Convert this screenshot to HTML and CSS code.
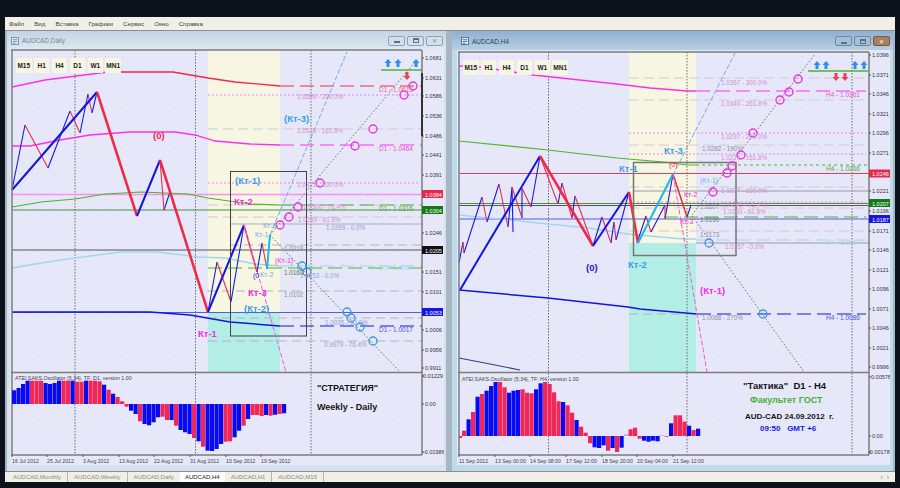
FILE: index.html
```html
<!DOCTYPE html>
<html lang="ru">
<head>
    <meta charset="UTF-8">
    <title>AUDCAD</title>
    <link rel="stylesheet" href="styles.css">
</head>
<body>
    <div class="app">
        <div class="menubar">
            <span>Файл</span><span>Вид</span><span>Вставка</span><span>Графики</span><span>Сервис</span><span>Окно</span><span>Справка</span>
        </div>

        <div class="mdi">
            <!-- Daily -->
            <div class="chart-window daily">
                <div class="titlebar">
                    <svg class="win-icon" width="8" height="8" viewBox="0 0 9 9"><rect x="0.5" y="0.5" width="8" height="8" fill="#dfeaf4" stroke="#6f93b5"/><path d="M2 3h5M2 5h5M2 7h3" stroke="#6f93b5"/></svg>
                    <span class="win-title">AUDCAD,Daily</span>
                    <div class="win-buttons">
                        <span class="win-btn"><i class="ic-min"></i></span>
                        <span class="win-btn"><i class="ic-max"></i></span>
                        <span class="win-btn">&#10005;</span>
                    </div>
                </div>
                <div class="chart">
                    <div class="tf-bar">
                        <span>M15</span><span>H1</span><span>H4</span><span>D1</span><span>W1</span><span>MN1</span>
                    </div>
                    <svg width="434" height="416" viewBox="10 49 434 416">
                        <defs>
                            <pattern id="dots-a" width="17" height="13" patternUnits="userSpaceOnUse"><rect x="3" y="4" width="1" height="1" fill="#ccd0e6"/></pattern>
                        </defs>
                        <rect x="12" y="50" width="410" height="405" fill="url(#dots-a)"/>
                        <rect class="band-yellow" x="208" y="50" width="72" height="262"/>
                        <rect class="band-teal" x="208" y="312" width="72" height="60"/>

                        <path class="vdot" d="M75 50V455M195.500 50V455M311 50V455"/>

                        <!-- fibo levels -->
                        <path class="fib-dot" d="M208 95H422M208 183H420"/>
                        <path class="fib-dash" d="M208 129H422M208 205H422M208 217H422"/>
                        <path class="fib-thin" d="M230 224H422"/>
                        <path class="fib-grey" d="M230 245H422M208 291H422M208 318H422M208 341H422"/>

                        <!-- horizontal price lines -->
                        <path class="line-pink" d="M12 194.500H422"/>
                        <path class="line-green" d="M12 210H422"/>
                        <path class="line-black" d="M12 250H422"/>
                        <path class="line-blue" d="M12 312.500H422"/>

                        <!-- moving curves -->
                        <polyline class="c-magenta" points="12,87 45,80 108,72"/>
                        <polyline class="c-red" points="108,72 173,72 208,78 235,82 280,86"/>
                        <path class="c-red dashed" d="M280 86H422"/>
                        <polyline class="c-magenta" points="12,146 30,146 60,140 90,135 130,132 175,132 195,135 215,141 250,144 280,145"/>
                        <path class="c-magenta dashed" d="M280 145H422"/>
                        <polyline class="c-green" points="12,207 41,202 75,199 105,194 141,192 188,194 208,198 250,204 280,205"/>
                        <path class="c-green dashed" d="M280 205H422M208 268H422"/>
                        <polyline class="c-sky" points="12,268 41,263 75,258 121,252 158,252 198,257 225,258 255,264 280,266"/>
                        <path class="c-sky dashed" d="M280 266H422"/>
                        <polyline class="c-navy" points="12,312 150,312 190,315 230,322 280,326"/>
                        <path class="c-navy dashed" d="M280 326H422"/>

                        <!-- zigzags -->
                        <path class="zz-thin-b" d="M12 190L25 125M48 168L70 111M80 133L88 94M92 113L97 92M164 210L170 192M208 312L217 262M231 302L244 225M257 272L262 243"/>
                        <path class="zz-thin-r" d="M25 125L48 168M70 111L80 133M88 94L92 113M160 160L164 210M170 192L175 210M217 262L231 302M262 243L267 269"/>
                        <polyline class="zz-thick-b" points="12,190 97,92"/>
                        <polyline class="zz-thick-r" points="97,92 137,216"/>
                        <polyline class="zz-thick-b" points="137,216 160,160"/>
                        <polyline class="zz-thick-r" points="160,160 208,312"/>
                        <polyline class="zz-thick-b" points="208,312 244,225"/>
                        <polyline class="zz-mid-r" points="244,225 257,272"/>
                        <polyline class="zz-cyan" points="267,269 270,235"/>

                        <rect class="box" x="230.500" y="171.500" width="76" height="164.500"/>

                        <path class="dotline" d="M270 235L415 62M270 235L400 372"/>
                        <path class="blue-dash" d="M270 235L347 52"/>
                        <path class="pink-dash" d="M244 225L286 372"/>

                        <g class="ring-m">
                            <circle cx="413" cy="86" r="4"/><circle cx="404" cy="95" r="4"/><circle cx="373" cy="129" r="4"/><circle cx="355" cy="146" r="4"/><circle cx="320" cy="183" r="4"/><circle cx="298" cy="207" r="4"/><circle cx="289" cy="217" r="4"/><circle cx="280" cy="225" r="4"/>
                        </g>
                        <g class="ring-b">
                            <circle cx="302" cy="266" r="4"/><circle cx="307" cy="272" r="4"/><circle cx="347" cy="312" r="4"/><circle cx="351" cy="318" r="4"/><circle cx="360" cy="327" r="4"/><circle cx="373" cy="341" r="4"/>
                        </g>

                        <!-- level labels -->
                        <g class="t-pink">
                            <text x="297" y="99">1.0589 - 200.0%</text>
                            <text x="297" y="133">1.0525 - 161.8%</text>
                            <text x="297" y="187">1.0371 - 100.0%</text>
                            <text x="303" y="209">1.0300 - 76.4%</text>
                            <text x="298" y="222">1.0289 - 61.8%</text>
                        </g>
                        <g class="t-steel">
                            <text x="326" y="230">1.0269 - 0.0%</text>
                            <text x="300" y="278">1.0153 - 0.0%</text>
                            <text x="325" y="325">1.0035 - 50.0%</text>
                            <text x="324" y="347">0.9979 - 76.4%</text>
                        </g>
                        <g class="t-grey">
                            <text x="284" y="251">1.0218</text>
                            <text x="284" y="297">1.0102</text>
                        </g>
                        <text class="t-olive" x="284" y="275">1.0160</text>
                        <text class="t-d1 red" x="379" y="92">D1 - 1.0613</text>
                        <text class="t-d1 mag" x="379" y="151">D1 - 1.0464</text>
                        <text class="t-d1 grn" x="379" y="211">D1 - 1.0316</text>
                        <text class="t-d1 sky" x="379" y="270">D1 - 1.0164</text>
                        <text class="t-d1 nav" x="379" y="332">D1 - 1.0017</text>

                        <!-- wave labels -->
                        <text class="t-big red" x="153" y="139">(0)</text>
                        <text class="t-big sky" x="284" y="122">(Кт-3)</text>
                        <text class="t-big sky" x="235" y="184">(Кт-1)</text>
                        <text class="t-big mag" x="234" y="205">Кт-2</text>
                        <text class="t-big sky" x="244" y="312">(Кт-2)</text>
                        <text class="t-big mag" x="248" y="296">Кт-3</text>
                        <text class="t-big mag" x="198" y="337">Кт-1</text>
                        <text class="t-small mag" x="275" y="263">(Кт-1)</text>
                        <text class="t-small sky" x="263" y="228">Кт-3</text>
                        <text class="t-small sky" x="255" y="237">Кт-1</text>
                        <text class="t-small sky" x="260" y="277">Кт-2</text>
                        <text class="t-small nav" x="253" y="278">(0</text>

                        <!-- arrows -->
                        <path class="up" d="M388 59l-3.500 4h2v4h3v-4h2zM398 59l-3.500 4h2v4h3v-4h2zM416 59l-3.500 4h2v4h3v-4h2z"/>
                        <path class="sig-line" d="M381 70H422"/>
                        <path class="down" d="M407 80l3.500-4h-2v-4h-3v4h-2z"/>

                        <!-- axis -->
                        <path class="frame" d="M11 372.500H422M11 50H422M12 50V455M422 50V455M11 455H422"/>
                        <path class="axis-mark" d="M422 73V136"/>
                        <path class="ticks" d="M422 58h2M422 78h2M422 96h2M422 116h2M422 136h2M422 155h2M422 175h2M422 233h2M422 272h2M422 292h2M422 330h2M422 350h2M422 368h2M422 376h2M422 404h2M422 452h2"/>
                        <g class="t-axis">
                            <text x="425" y="60">1.0681</text><text x="425" y="80">1.0631</text><text x="425" y="98">1.0586</text><text x="425" y="118">1.0536</text><text x="425" y="138">1.0486</text><text x="425" y="157">1.0441</text><text x="425" y="177">1.0391</text><text x="425" y="235">1.0246</text><text x="425" y="274">1.0151</text><text x="425" y="294">1.0101</text><text x="425" y="332">1.0006</text><text x="425" y="352">0.9956</text><text x="425" y="370">0.9911</text><text x="423" y="378">0.01229</text><text x="425" y="406">0.00</text><text x="423" y="454">-0.01986</text>
                        </g>
                        <rect class="tag-red" x="422" y="190" width="21" height="8"/><text class="t-tag" x="425" y="196.500">1.0384</text>
                        <rect class="tag-green" x="422" y="206" width="21" height="8"/><text class="t-tag" x="425" y="212.500">1.0304</text>
                        <rect class="tag-black" x="422" y="246" width="21" height="8"/><text class="t-tag" x="425" y="252.500">1.0205</text>
                        <rect class="tag-blue" x="422" y="308" width="21" height="8"/><text class="t-tag" x="425" y="314.500">1.0053</text>

                        <!-- oscillator -->
                        <g id="osc-daily"></g>
                        <text class="t-osc" x="15" y="380">ATEI.SAKS.Oscillator (5,34), TF: D1, version 1.00</text>
                        <text class="t-note" x="317" y="391">"СТРАТЕГИЯ"</text>
                        <text class="t-note" x="317" y="410">Weekly - Daily</text>
                        <g class="t-date">
                            <text x="12" y="463">16 Jul 2012</text><text x="47" y="463">25 Jul 2012</text><text x="83" y="463">3 Aug 2012</text><text x="119" y="463">13 Aug 2012</text><text x="154" y="463">22 Aug 2012</text><text x="190" y="463">31 Aug 2012</text><text x="226" y="463">10 Sep 2012</text><text x="261" y="463">19 Sep 2012</text>
                        </g>
                        <path class="frame-thin" d="M12 455v2M47 455v2M83 455v2M119 455v2M154 455v2M190 455v2M226 455v2M261 455v2"/>
                    </svg>
                </div>
            </div>

            <!-- H4 -->
            <div class="chart-window h4">
                <div class="titlebar">
                    <svg class="win-icon" width="8" height="8" viewBox="0 0 9 9"><rect x="0.5" y="0.5" width="8" height="8" fill="#dfeaf4" stroke="#49708f"/><path d="M2 3h5M2 5h5M2 7h3" stroke="#49708f"/></svg>
                    <span class="win-title">AUDCAD,H4</span>
                    <div class="win-buttons">
                        <span class="win-btn"><i class="ic-min"></i></span>
                        <span class="win-btn"><i class="ic-max"></i></span>
                        <span class="win-btn close">&#10005;</span>
                    </div>
                </div>
                <div class="chart">
                    <div class="tf-bar">
                        <span>M15</span><span>H1</span><span>H4</span><span>D1</span><span>W1</span><span>MN1</span>
                    </div>
                    <svg width="433" height="415" viewBox="457 50 433 415">
                        <defs>
                            <pattern id="dots-b" width="17" height="13" patternUnits="userSpaceOnUse"><rect x="3" y="4" width="1" height="1" fill="#ccd0e6"/></pattern>
                        </defs>
                        <rect x="459" y="52" width="410" height="403" fill="url(#dots-b)"/>
                        <rect class="band-yellow" x="629" y="52" width="67" height="191"/>
                        <rect class="band-teal" x="629" y="243" width="67" height="129"/>

                        <path class="vdot" d="M548.500 52V455M687 52V455M852 52V455"/>

                        <!-- fibo levels -->
                        <path class="fib-dash" d="M629 78H866M629 100H866M629 145H866M629 187H866M629 208H866M629 231H866"/>
                        <path class="fib-dot" d="M629 133H866M629 154H866M629 202H866"/>
                        <path class="fib-grey" d="M629 314H700"/>

                        <!-- horizontal price lines -->
                        <path class="line-red" d="M459 173.500H869"/>
                        <path class="line-grey" d="M633 191H869M696 243H869"/>
                        <path class="line-green" d="M459 203.500H869"/>
                        <path class="line-black" d="M459 205.500H869"/>
                        <path class="line-blue" d="M459 219H869"/>

                        <!-- moving curves -->
                        <polyline class="c-magenta" points="459,66 480,67 533,75 617,84 650,88 687,91 696,91"/>
                        <path class="c-magenta dashed" d="M696 91H866"/>
                        <polyline class="c-green" points="459,141 548,150 617,158 663,162 687,165 696,165"/>
                        <path class="c-green dotted" d="M696 165H868"/>
                        <path class="c-green dashed" d="M664 217H866"/>
                        <polyline class="c-sky" points="459,215 548,224 588,228 628,234 683,239 696,239"/>
                        <path class="c-sky dashed" d="M696 240H866"/>
                        <polyline class="c-navy" points="459,290 548,298 628,307 640,309 697,314"/>
                        <path class="c-navy dashed" d="M697 314H866"/>
                        <polyline class="c-dark" points="459,358 490,364 520,370"/>

                        <!-- zigzags -->
                        <path class="zz-thin-b" d="M459 263L463 242M464 253L482 197M487 222L499 184M508 227L512 187M513 232L512 187M522 218L522 188M531 207L540 156M558 204L562 183M572 218L575 196M593 246L602 217M611 243L614 222M616 240L629 192M637 243L646 216M651 232L665 205M665 219L673 174M687 217L691 205"/>
                        <path class="zz-thin-r" d="M463 242L464 253M482 197L487 222M499 184L508 227M512 187L522 218M522 188L531 207M540 156L558 204M562 183L572 218M575 196L593 246M602 217L611 243M614 222L616 240M646 216L651 232M665 205L665 219"/>
                        <polyline class="zz-thick-b" points="460,290 540,156"/>
                        <polyline class="zz-thick-r" points="540,156 593,246"/>
                        <polyline class="zz-thick-b" points="593,246 629,192"/>
                        <polyline class="zz-thick-r" points="629,192 638,243"/>
                        <polyline class="zz-cyan" points="638,243 673,174"/>
                        <polyline class="zz-mid-r" points="673,174 687,217"/>

                        <rect class="box thick" x="633.500" y="162.500" width="102.500" height="93"/>

                        <path class="dotline" d="M692 215L815 54M692 216L804 372"/>
                        <path class="blue-dash" d="M673 175L735 53"/>
                        <path class="pink-dash" d="M673 175L707 372"/>

                        <g class="ring-m">
                            <circle cx="798" cy="79" r="4"/><circle cx="789" cy="92" r="4"/><circle cx="780" cy="100" r="4"/><circle cx="753" cy="133" r="4"/><circle cx="741" cy="155" r="4"/><circle cx="732" cy="166" r="4"/><circle cx="727" cy="173" r="4"/><circle cx="713" cy="192" r="4"/>
                        </g>
                        <g class="ring-b">
                            <circle cx="709" cy="243" r="4"/><circle cx="763" cy="314" r="4"/>
                        </g>

                        <!-- level labels -->
                        <g class="t-pink">
                            <text x="721" y="85">1.0367 - 300.0%</text>
                            <text x="721" y="106">1.0340 - 261.8%</text>
                            <text x="721" y="139">1.0297 - 200.0%</text>
                            <text x="721" y="160">1.0277 - 161.8%</text>
                            <text x="721" y="193">1.0237 - 100.0%</text>
                            <text x="723" y="207">1.0246 - 76.4%</text>
                            <text x="723" y="214">1.0260 - 61.8%</text>
                            <text x="725" y="249">1.0157 - 0.0%</text>
                        </g>
                        <g class="t-grey">
                            <text x="702" y="151">1.0282 - 190%</text>
                            <text x="700" y="209">1.0207</text>
                            <text x="700" y="237">1.0173</text>
                            <text x="702" y="320">1.0068 - 270%</text>
                        </g>
                        <text class="t-olive" x="700" y="222">1.0190</text>
                        <text class="t-d1 mag" x="826" y="97">H4 - 1.0361</text>
                        <text class="t-d1 grn" x="826" y="171">H4 - 1.0266</text>
                        <text class="t-d1 sky" x="826" y="245">H4 - 1.0164</text>
                        <text class="t-d1 nav" x="826" y="320">H4 - 1.0086</text>

                        <!-- wave labels -->
                        <text class="t-big sky" x="664" y="154">Кт-3</text>
                        <text class="t-big sky" x="619" y="172">Кт-1</text>
                        <text class="t-small red" x="669" y="167">(0)</text>
                        <text class="t-small mag" x="684" y="197">Кт-2</text>
                        <text class="t-small sky" x="700" y="183">(Кт-1)</text>
                        <text class="t-small mag" x="680" y="224">Кт-3</text>
                        <text class="t-big sky" x="628" y="268">Кт-2</text>
                        <text class="t-big nav" x="586" y="271">(0)</text>
                        <text class="t-big mag" x="700" y="294">(Кт-1)</text>

                        <!-- arrows -->
                        <path class="up" d="M817 61l-3.500 4h2v4h3v-4h2zM826 61l-3.500 4h2v4h3v-4h2zM855 61l-3.500 4h2v4h3v-4h2zM864 61l-3.500 4h2v4h3v-4h2z"/>
                        <path class="sig-line" d="M808 71H868"/>
                        <path class="down" d="M836 81l3.500-4h-2v-4h-3v4h-2zM845 81l3.500-4h-2v-4h-3v4h-2z"/>

                        <!-- axis -->
                        <path class="frame" d="M458 372.500H869M458 52H869M459 52V455M869 52V455M458 455H869"/>
                        <path class="ticks" d="M869 55h2M869 75h2M869 94h2M869 114h2M869 133h2M869 153h2M869 191h2M869 211h2M869 231h2M869 250h2M869 270h2M869 289h2M869 309h2M869 328h2M869 348h2M869 367h2M869 377h2M869 436h2M869 452h2"/>
                        <g class="t-axis">
                            <text x="872" y="57">1.0396</text><text x="872" y="77">1.0371</text><text x="872" y="96">1.0346</text><text x="872" y="116">1.0321</text><text x="872" y="135">1.0296</text><text x="872" y="155">1.0271</text><text x="872" y="193">1.0221</text><text x="872" y="213">1.0196</text><text x="872" y="233">1.0171</text><text x="872" y="252">1.0146</text><text x="872" y="272">1.0121</text><text x="872" y="291">1.0096</text><text x="872" y="311">1.0071</text><text x="872" y="330">1.0046</text><text x="872" y="350">1.0021</text><text x="872" y="369">0.9996</text><text x="871" y="379">0.00578</text><text x="872" y="438">0.00</text><text x="868" y="454">-0.00178</text>
                        </g>
                        <rect class="tag-red" x="869" y="169.500" width="21" height="8"/><text class="t-tag" x="872" y="176">1.0246</text>
                        <rect class="tag-green" x="869" y="199" width="21" height="8"/><text class="t-tag" x="872" y="205.500">1.0207</text>
                        <rect class="tag-blue" x="869" y="215" width="21" height="8"/><text class="t-tag" x="872" y="221.500">1.0187</text>

                        <!-- oscillator -->
                        <rect class="bar-r" x="459" y="436" width="3" height="2"/>
                        <g id="osc-h4"></g>
                        <text class="t-osc" x="462" y="381">ATEI.SAKS.Oscillator (5,34), TF: H4, version 1.00</text>
                        <text class="t-note big" x="743" y="389">"Тактика"  D1 - H4</text>
                        <text class="t-note green" x="750" y="403">Факультет ГОСТ</text>
                        <text class="t-note small" x="745" y="419">AUD-CAD 24.09.2012  г.</text>
                        <text class="t-note blue" x="760" y="431">09:50   GMT +6</text>
                        <g class="t-date">
                            <text x="459" y="463">11 Sep 2012</text><text x="495" y="463">13 Sep 00:00</text><text x="530" y="463">14 Sep 08:00</text><text x="566" y="463">17 Sep 12:00</text><text x="602" y="463">18 Sep 20:00</text><text x="637" y="463">20 Sep 04:00</text><text x="673" y="463">21 Sep 12:00</text>
                        </g>
                        <path class="frame-thin" d="M459 455v2M495 455v2M530 455v2M566 455v2M602 455v2M637 455v2M673 455v2"/>
                    </svg>
                </div>
            </div>
        </div>

        <div class="tabbar">
            <span class="tab">AUDCAD,Monthly</span>
            <span class="tab">AUDCAD,Weekly</span>
            <span class="tab">AUDCAD,Daily</span>
            <span class="tab active">AUDCAD,H4</span>
            <span class="tab">AUDCAD,H1</span>
            <span class="tab">AUDCAD,M15</span>
            <span class="tab-arrows">&lsaquo;&nbsp;&nbsp;&rsaquo;</span>
        </div>
    </div>

    <script src="chart.js"></script>
</body>
</html>
```

FILE: styles.css
```css
* {
    margin: 0;
    padding: 0;
    box-sizing: border-box;
}

body {
    background: #0e121b;
    font-family: 'Liberation Sans', sans-serif;
    overflow: hidden;
}

.app {
    width: 890px;
    height: 465px;
    margin: 17px 0 0 5px;
    background: #c3d3e0;
    display: flex;
    flex-direction: column;
}

.menubar {
    height: 14px;
    background: #f1efe7;
    border-bottom: 1px solid #8d8d8d;
    display: flex;
    gap: 10px;
    padding-left: 4px;
    align-items: center;
    font-size: 6.200px;
    color: #444;
}

.mdi {
    flex: 1;
    display: flex;
    gap: 6px;
    padding-left: 2px;
    background: #a9b6c2;
    min-height: 0;
}

.chart-window {
    display: flex;
    flex-direction: column;
    background: #d6e3ee;
}

.chart-window.daily {
    width: 439px;
    padding: 0 0 3px 0;
}

.chart-window.h4 {
    width: 441px;
    background: #bcdcec;
}

.titlebar {
    display: flex;
    align-items: center;
    height: 18px;
    flex-shrink: 0;
    padding: 1px 3px 0 4px;
    background: linear-gradient(#c2d4e4, #dce8f1);
    font-size: 6.400px;
    color: #75879a;
}

.h4 .titlebar {
    height: 19px;
    background: linear-gradient(#8fb0d1, #b7cfe4);
    color: #33414f;
}

.win-icon {
    margin: 0 3px 0 0;
}

.h4 .win-icon {
    margin-left: 5px;
}

.win-buttons {
    margin-left: auto;
    display: flex;
    gap: 2px;
}

.win-btn {
    width: 17px;
    height: 10px;
    border: 1px solid #8ba3b9;
    border-radius: 2px;
    background: #d3e0eb;
    display: flex;
    align-items: center;
    justify-content: center;
    font-size: 6px;
    color: #7a8b9b;
}

.h4 .win-btn {
    background: #a4bfd6;
    border-color: #6c89a4;
}

.h4 .win-btn.close {
    background: #a9805f;
    border-color: #7c5a40;
    color: #fff;
}

.ic-min {
    display: block;
    width: 6px;
    height: 2px;
    margin-top: 3px;
    background: #5d7083;
}

.ic-max {
    display: block;
    width: 6px;
    height: 5px;
    border: 1px solid #5d7083;
    border-top-width: 2px;
}

.chart {
    position: relative;
    background: #e6e8fa;
    margin: 0 2px 0 3px;
}

.h4 .chart {
    margin: 0 3px 0 5px;
}

.chart svg {
    display: block;
}

/* тайм-фреймы поверх графика */
.tf-bar {
    position: absolute;
    left: 6px;
    top: 9px;
    display: flex;
    gap: 2.400px;
    font-size: 6.500px;
    font-weight: bold;
    color: #222;
}

.h4 .tf-bar {
    top: 10px;
}

.tf-bar span {
    width: 15.500px;
    height: 15px;
    background: #f6f6e2;
    display: flex;
    align-items: center;
    justify-content: center;
}

.tabbar {
    height: 11px;
    background: #f1efe7;
    border-top: 1px solid #8d8d8d;
    display: flex;
    align-items: center;
    padding-left: 2px;
    font-size: 6px;
    color: #8a8a8a;
    flex-shrink: 0;
}

.tab {
    height: 100%;
    display: flex;
    align-items: center;
    padding: 0 6px;
    border-right: 1px solid #b5b5b5;
}

.tab.active {
    background: #fff;
    color: #222;
    border: 0;
    margin-left: -1px;
    padding: 0 5px;
}

.tab-arrows {
    margin-left: auto;
    padding-right: 6px;
    font-size: 7px;
}

/* области и сетка */
.band-yellow { fill: #f6f6e2; }
.band-teal { fill: #b2eee6; }
.vdot { stroke: #6b6b6b; stroke-width: 1; stroke-dasharray: 1.500 1.500; fill: none; }
.frame { stroke: #7c7c7c; stroke-width: 1.500; fill: none; }
.frame-thin, .ticks { stroke: #555; stroke-width: 1; fill: none; }
.axis-mark { stroke: #111; stroke-width: 1.500; }

/* уровни */
.fib-dot { stroke: #ee82ee; stroke-width: 1; stroke-dasharray: 2 2; fill: none; }
.fib-dash { stroke: #d3c5da; stroke-width: 1.200; stroke-dasharray: 10 5; fill: none; }
.fib-thin { stroke: #b0a8d0; stroke-width: 1; fill: none; }
.fib-grey { stroke: #b0b4c4; stroke-width: 1; stroke-dasharray: 9 5; fill: none; }

.line-pink { stroke: #ff8cf0; stroke-width: 1.300; }
.line-red { stroke: #e0405a; stroke-width: 1; }
.line-green { stroke: #4a8f3a; stroke-width: 1; }
.line-black { stroke: #555; stroke-width: 1; }
.line-blue { stroke: #5a5ae0; stroke-width: 1.200; }
.line-grey { stroke: #9a9aa6; stroke-width: 1; }

/* кривые */
polyline, .dashed, .dotted { fill: none; }
.c-magenta { stroke: #ff2eea; stroke-width: 1.300; }
.c-red { stroke: #f0284a; stroke-width: 1.300; }
.c-green { stroke: #4fb32a; stroke-width: 1.200; }
.c-sky { stroke: #9fd6ee; stroke-width: 1.300; }
.c-navy { stroke: #1414e0; stroke-width: 1.500; }
.c-dark { stroke: #3a3a8a; stroke-width: 1.200; }
.dashed { stroke-dasharray: 14 6; stroke-width: 1.200; }
.dotted { stroke-dasharray: 3 3; stroke-width: 1; }

.zz-thin-b { stroke: #1a1ae0; stroke-width: 1.100; fill: none; }
.zz-thin-r { stroke: #e82c50; stroke-width: 1.100; fill: none; }
.zz-thick-b { stroke: #1414e0; stroke-width: 2; }
.zz-thick-r { stroke: #f0284a; stroke-width: 2.500; }
.zz-mid-r { stroke: #e8284a; stroke-width: 1.500; }
.zz-cyan { stroke: #18b8ea; stroke-width: 2; }

.box { fill: none; stroke: #444; stroke-width: 1; }
.box.thick { stroke: #777; stroke-width: 1.500; }
.dotline { stroke: #6c6c6c; stroke-width: 1; stroke-dasharray: 1.500 2; fill: none; }
.blue-dash { stroke: #78ace0; stroke-width: 1; stroke-dasharray: 5 2; fill: none; }
.pink-dash { stroke: #f05cdc; stroke-width: 1; stroke-dasharray: 5 2; fill: none; }
.ring-m circle { fill: none; stroke: #f032e0; stroke-width: 1.400; }
.ring-b circle { fill: none; stroke: #3c96e6; stroke-width: 1.300; }

.up { fill: #2f8fe8; }
.down { fill: #e8405a; }
.sig-line { stroke: #4fb32a; stroke-width: 1.500; }

/* подписи */
text { font-family: 'Liberation Sans', sans-serif; white-space: pre; }
.t-pink text { font-size: 6.300px; fill: #d48ec8; }
.t-steel text { font-size: 6.300px; fill: #8ea4cc; }
.t-grey text { font-size: 6.300px; fill: #8c8c98; }
.t-olive { font-size: 6.300px; fill: #5c7a48; }
.t-d1 { font-size: 6.500px; }
.t-d1.red { fill: #e86a88; }
.t-d1.mag { fill: #e850d0; }
.t-d1.grn { fill: #58a848; }
.t-d1.sky { fill: #a8d4ea; }
.t-d1.nav { fill: #5050d8; }

.t-big { font-size: 9.500px; font-weight: bold; }
.t-small { font-size: 7px; }
.red { fill: #f0284a; }
.mag { fill: #f628e0; }
.sky { fill: #3c9ce8; }
.nav { fill: #2020c0; }
.t-small.sky { fill: #72b4e6; }

.t-axis text { font-size: 5.500px; fill: #333; }
.t-tag { font-size: 5.500px; fill: #fff; }
.tag-red { fill: #e8284a; }
.tag-green { fill: #157a15; }
.tag-black { fill: #111; }
.tag-blue { fill: #1414e0; }

.bar-b { fill: #0a0af0; }
.bar-r { fill: #f0285a; }
.bar-l { fill: #aab6e8; }

.t-osc { font-size: 5.300px; fill: #444; }
.t-date text { font-size: 5.200px; fill: #444; }

.t-note { font-size: 9px; font-weight: bold; fill: #151515; }
.t-note.big { font-size: 9.500px; }
.t-note.green { font-size: 9px; fill: #48b030; }
.t-note.small { font-size: 8px; }
.t-note.blue { font-size: 8px; fill: #1818e0; }
```

FILE: chart.js
```js
// столбики осциллятора: цвет и высоты подряд, минус - вниз от нуля
const dailyBars = [
    ['b', 13.7, 16, 20, 23.3],
    ['r', 23.3, 23.3, 23.3],
    ['b', 21, 20, 21, 23.3],
    ['r', 23.3, 23.3],
    ['b', 23.3],
    ['r', 22.3, 22.3],
    ['b', 23.3],
    ['r', 23.3, 23.3, 22.7],
    ['b', 19.3],
    ['r', 14.3],
    ['b', 10.3],
    ['r', 7, 2.7, -2.7],
    ['b', -6.7, -10],
    ['r', -17.3],
    ['b', -20, -21.3, -18.3, -13.3],
    ['r', -12.7, -16],
    ['b', -16],
    ['r', -21.7],
    ['b', -26, -28.3, -30],
    ['r', -34],
    ['b', -37.3],
    ['r', -42.7],
    ['b', -46.7, -47, -45, -40],
    ['r', -37.7, -37.3],
    ['b', -33.3, -26.7],
    ['r', -21.7],
    ['b', -15],
    ['r', -11, -11, -12],
    ['b', -11],
    ['r', -11.7],
    ['b', -10.7],
    ['r', -10],
    ['b', -9.3]
];

const h4Bars = [
    ['r', 5.3],
    ['b', 16.7],
    ['r', 24],
    ['b', 39.3],
    ['r', 42],
    ['b', 45.3, 50, 54],
    ['r', 54, 48.7],
    ['b', 43.3, 45.3, 46],
    ['r', 46.7, 43.3, 42.7],
    ['b', 46.7, 52.7],
    ['r', 54, 52, 43.7, 34.7],
    ['b', 34],
    ['r', 30.7, 23.3],
    ['b', 16],
    ['r', 9.3, 3.3, -7.3],
    ['b', -11.3, -12, -9.3],
    ['r', -14.7],
    ['b', -12],
    ['r', -16],
    ['b', -11.7],
    ['l', 1.7],
    ['r', 6.7, 8.3, -2.7],
    ['b', -4.7, -5.7, -4.7, -5.3],
    ['l', 0.7],
    ['r', -0.7],
    ['b', 12.7],
    ['r', 20.7, 20.7, 14.3],
    ['b', 10.3],
    ['r', 6],
    ['b', 7.3]
];

function drawBars(id, runs, startX, zeroY) {
    const group = document.getElementById(id);
    let x = startX;

    runs.forEach(run => {
        const color = run[0];
        run.slice(1).forEach(value => {
            const rect = document.createElementNS('http://www.w3.org/2000/svg', 'rect');
            rect.setAttribute('class', 'bar-' + color);
            rect.setAttribute('x', x);
            rect.setAttribute('y', value > 0 ? zeroY - value : zeroY);
            rect.setAttribute('width', 4.2);
            rect.setAttribute('height', Math.abs(value));
            group.appendChild(rect);
            x += 4.5;
        });
    });
}

drawBars('osc-daily', dailyBars, 12, 404);
drawBars('osc-h4', h4Bars, 462, 436);
```
